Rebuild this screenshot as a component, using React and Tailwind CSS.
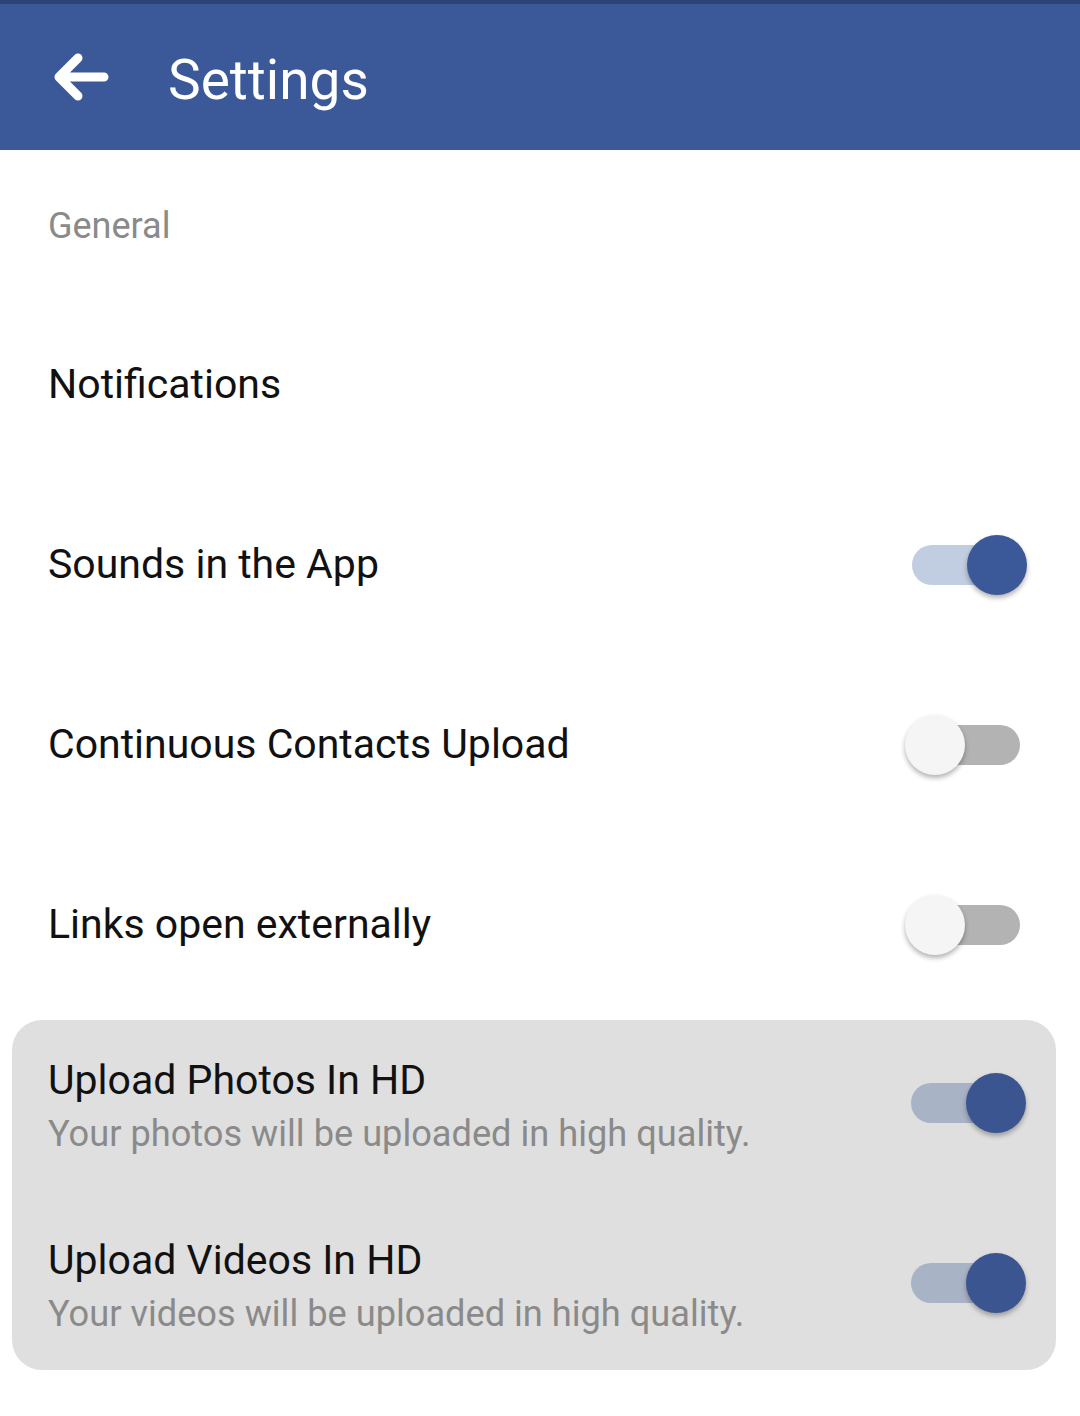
import React from 'react';

const font = { fontFamily: 'Roboto, "Noto Sans", sans-serif' };

function Toggle({ on, dim }) {
  const track = on ? (dim ? 'bg-[#a9b3c6]' : 'bg-[#c1cde0]') : 'bg-[#b3b3b3]';
  const thumb = on
    ? dim
      ? 'right-0 bg-[#3a5590]'
      : 'right-0 bg-[#3b5998]'
    : 'left-0 bg-[#f5f5f5]';
  return (
    <div className="relative w-[122px] h-[60px] shrink-0">
      <div className={`absolute left-[7px] right-[7px] top-[10px] h-[40px] rounded-full ${track}`} />
      <div
        className={`absolute top-0 w-[60px] h-[60px] rounded-full shadow-[0_3px_5px_rgba(0,0,0,0.3)] ${thumb}`}
      />
    </div>
  );
}

function Row({ label, toggle }) {
  return (
    <div className="h-[180px] flex items-center justify-between pl-[48px] pr-[53px]">
      <span className="text-[41px] text-[#111]">{label}</span>
      {toggle !== undefined && <Toggle on={toggle} />}
    </div>
  );
}

export default function App() {
  const hd = [
    { title: 'Upload Photos In HD', sub: 'Your photos will be uploaded in high quality.' },
    { title: 'Upload Videos In HD', sub: 'Your videos will be uploaded in high quality.' },
  ];

  return (
    <div className="w-[1080px] h-[1416px] bg-white overflow-hidden" style={font}>
      {/* app bar */}
      <div className="h-[4px] bg-[#2c4475]" />
      <div className="h-[146px] bg-[#3b5998] flex items-center">
        <svg className="ml-[50px]" width="64" height="60" viewBox="0 0 64 60" fill="none">
          <path d="M9 30H54M28 11L9 30L28 49" stroke="white" strokeWidth="9" strokeLinecap="round" strokeLinejoin="round" />
        </svg>
        <span className="ml-[54px] mt-[6px] text-[55px] text-white">Settings</span>
      </div>

      <div className="h-[145px] pt-[49px] pl-[48px]">
        <span className="text-[36px] text-[#8a8a8a]">General</span>
      </div>

      <Row label="Notifications" />
      <Row label="Sounds in the App" toggle={true} />
      <Row label="Continuous Contacts Upload" toggle={false} />
      <Row label="Links open externally" toggle={false} />

      <div className="mt-[5px] ml-[12px] mr-[24px] rounded-[30px] bg-[#dfdfdf] pt-[34px] pb-[30px] pl-[36px] pr-[30px] flex flex-col gap-[74px]">
        {hd.map((r) => (
          <div key={r.title} className="flex items-center justify-between">
            <div className="flex flex-col">
              <span className="text-[41px] leading-[53px] text-[#111]">{r.title}</span>
              <span className="text-[36.2px] leading-[53px] text-[#8a8a8a]">{r.sub}</span>
            </div>
            <div className="mb-[8px]">
              <Toggle on dim />
            </div>
          </div>
        ))}
      </div>
    </div>
  );
}
